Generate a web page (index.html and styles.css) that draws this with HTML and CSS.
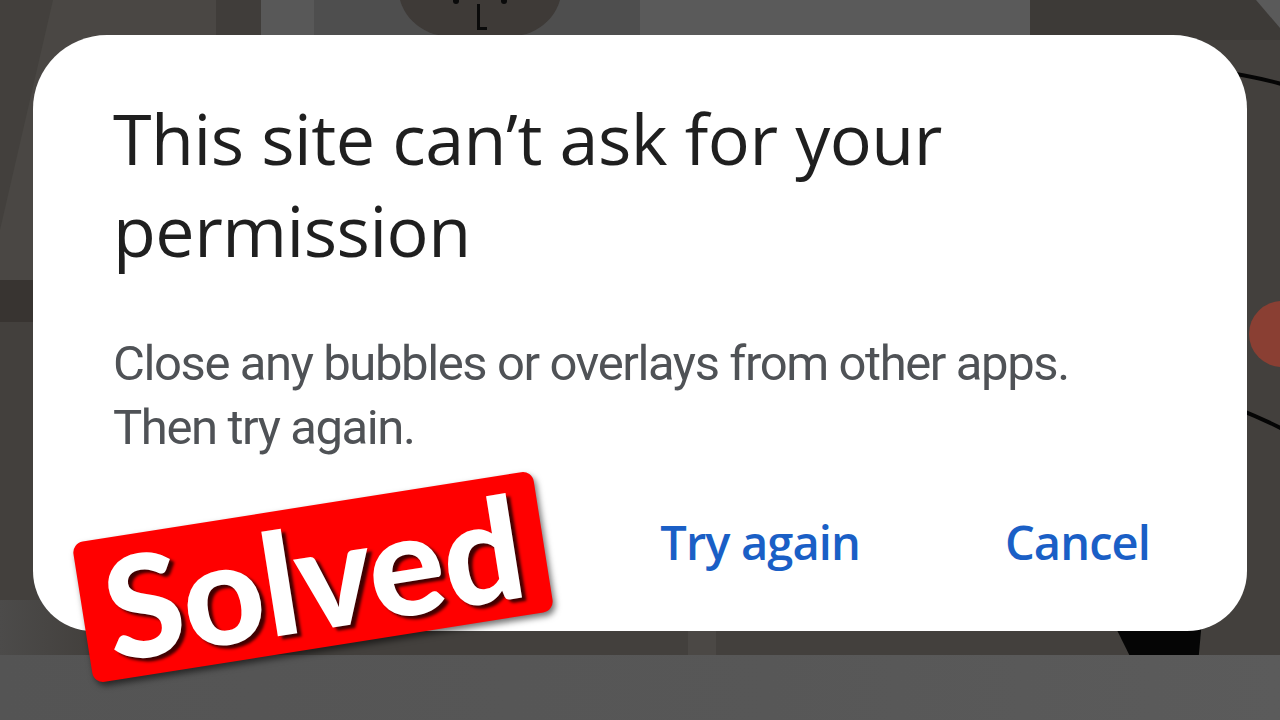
FILE: index.html
```html
<!DOCTYPE html>
<html lang="en">
<head>
<meta charset="utf-8">
<title>This site can’t ask for your permission</title>
<link rel="stylesheet" href="styles.css">
</head>
<body>
<div class="screen">
  <div class="backdrop" aria-hidden="true">
    <div class="bg-slant"></div>
    <div class="bg-strip s1"></div>
    <div class="bg-strip s2"></div>
    <div class="bg-strip s3"></div>
    <div class="bg-strip s4"></div>
    <div class="bg-strip s5"></div>
    <div class="bg-face">
      <span class="eye eye-l"></span>
      <span class="eye eye-r"></span>
      <span class="nose"></span>
    </div>
    <div class="bg-corner"></div>
    <div class="bg-left-band"></div>
    <div class="bg-left-glow"></div>
    <div class="bg-column"></div>
    <div class="bg-wedge"></div>
    <svg class="bg-lines" width="60" height="720" viewBox="0 0 60 720">
      <path d="M0 74 Q25 78 60 88" fill="none" stroke="#050505" stroke-width="4"/>
      <path d="M0 408 Q30 420 60 436" fill="none" stroke="#050505" stroke-width="4"/>
    </svg>
    <div class="bg-dot"></div>
    <div class="bg-floor"></div>
  </div>

  <div class="dialog">
    <h1 class="title">This site can’t ask for your<br>permission</h1>
    <p class="message">Close any bubbles or overlays from other apps.<br>Then try again.</p>
    <div class="actions">
      <button class="action">Try again</button>
      <button class="action">Cancel</button>
    </div>
  </div>

  <div class="badge"><span class="badge-text">Solved</span></div>
</div>
</body>
</html>
```

FILE: styles.css
```css
* { box-sizing: border-box; }

html, body {
  margin: 0;
  padding: 0;
  background: #3e3b38;
}

.screen {
  position: relative;
  width: 1280px;
  height: 720px;
  overflow: hidden;
  padding: 35px 0 0 33px;
  background: #43403d;
}

/* ---------- backdrop (blurred app behind the dialog) ---------- */
.backdrop {
  position: absolute;
  inset: 0;
  z-index: 0;
}
.backdrop > * { position: absolute; }

.bg-slant {
  left: 0; top: 0; width: 216px; height: 290px;
  background: #4a4744;
  clip-path: polygon(53px 0, 100% 0, 100% 100%, 0 100%, 0 230px);
}
.bg-strip { top: 0; height: 40px; }
.s1 { left: 216px; width: 45px; background: #403d3a; }
.s2 { left: 261px; width: 53px; background: #585858; }
.s3 { left: 314px; width: 326px; background: #4e4e4e; }
.s4 { left: 640px; width: 390px; background: #5a5a5a; }
.s5 { left: 1030px; width: 250px; background: #3d3a37; }

.bg-face {
  left: 398px; top: -30px; width: 164px; height: 66px;
  background: #3e3a37;
  border-radius: 0 0 50px 50px;
}
.eye {
  position: absolute; top: 28px; width: 6px; height: 6px;
  border-radius: 50%; background: #0a0a0a;
}
.eye-l { left: 55px; }
.eye-r { left: 103px; }
.nose {
  position: absolute; left: 79px; top: 34px; width: 10px; height: 26px;
  border-left: 3px solid #0a0a0a; border-bottom: 3px solid #0a0a0a;
}

.bg-corner {
  right: 0; top: 0; width: 40px; height: 40px;
  background: #5a5a5a;
  clip-path: polygon(40% 0, 100% 0, 100% 70%);
}
.bg-left-band {
  left: 0; top: 280px; width: 40px; height: 42px;
  background: #383431;
}
.bg-left-glow {
  left: 0; top: 600px; width: 90px; height: 60px;
  background: linear-gradient(90deg, #4c4b4a, rgba(76, 75, 74, 0));
}
.bg-column {
  left: 688px; top: 620px; width: 28px; height: 40px;
  background: #4b4845;
}
.bg-wedge {
  left: 1112px; top: 620px; width: 90px; height: 40px;
  background: #050505;
  clip-path: polygon(0 0, 100% 0, 96% 100%, 22% 100%);
}
.bg-lines { left: 1236px; top: 0; }
.bg-dot {
  left: 1249px; top: 301px; width: 66px; height: 66px;
  border-radius: 50%;
  background: #8a3f33;
}
.bg-floor {
  left: 0; top: 655px; width: 1280px; height: 65px;
  background: linear-gradient(90deg, #545454, #575757 60%, #5b5b5b);
}

/* ---------- dialog ---------- */
.dialog {
  position: relative;
  z-index: 1;
  width: 1214px;
  height: 596px;
  padding: 57px 97px 0 80px;
  background: #ffffff;
  border-radius: 74px 74px 60px 60px;
  display: flex;
  flex-direction: column;
}

.title {
  margin: 0;
  font-family: "Open Sans", "Liberation Sans", sans-serif;
  font-weight: 400;
  font-size: 70px;
  line-height: 92px;
  letter-spacing: -0.5px;
  color: #1f1f1f;
}

.message {
  margin: 56px 0 0;
  font-family: Roboto, "Liberation Sans", sans-serif;
  font-weight: 400;
  font-size: 49px;
  line-height: 64px;
  letter-spacing: -1.4px;
  color: #4f5256;
  white-space: nowrap;
}

.actions {
  margin-top: 50px;
  display: flex;
  justify-content: flex-end;
  gap: 145px;
}

.action {
  padding: 0;
  border: 0;
  background: none;
  font-family: "Open Sans", "Liberation Sans", sans-serif;
  font-weight: 550;
  font-size: 47px;
  line-height: 64px;
  letter-spacing: -0.9px;
  color: #1a5fc6;
}

/* ---------- "Solved" sticker ---------- */
.badge {
  position: absolute;
  z-index: 2;
  left: 80px;
  top: 506px;
  width: 466px;
  height: 142px;
  background: #ff0000;
  border-radius: 11px;
  transform: rotate(-9deg);
  box-shadow: 2px 4px 6px rgba(0, 0, 0, 0.55);
  display: flex;
  align-items: center;
  justify-content: center;
}
.badge-text {
  font-family: Lato, "Liberation Sans", sans-serif;
  font-weight: 900;
  font-size: 142px;
  line-height: 1;
  letter-spacing: -1px;
  color: #ffffff;
  text-shadow: 4px 4px 3px rgba(0, 0, 0, 0.75);
  margin-top: -4px;
}
```
